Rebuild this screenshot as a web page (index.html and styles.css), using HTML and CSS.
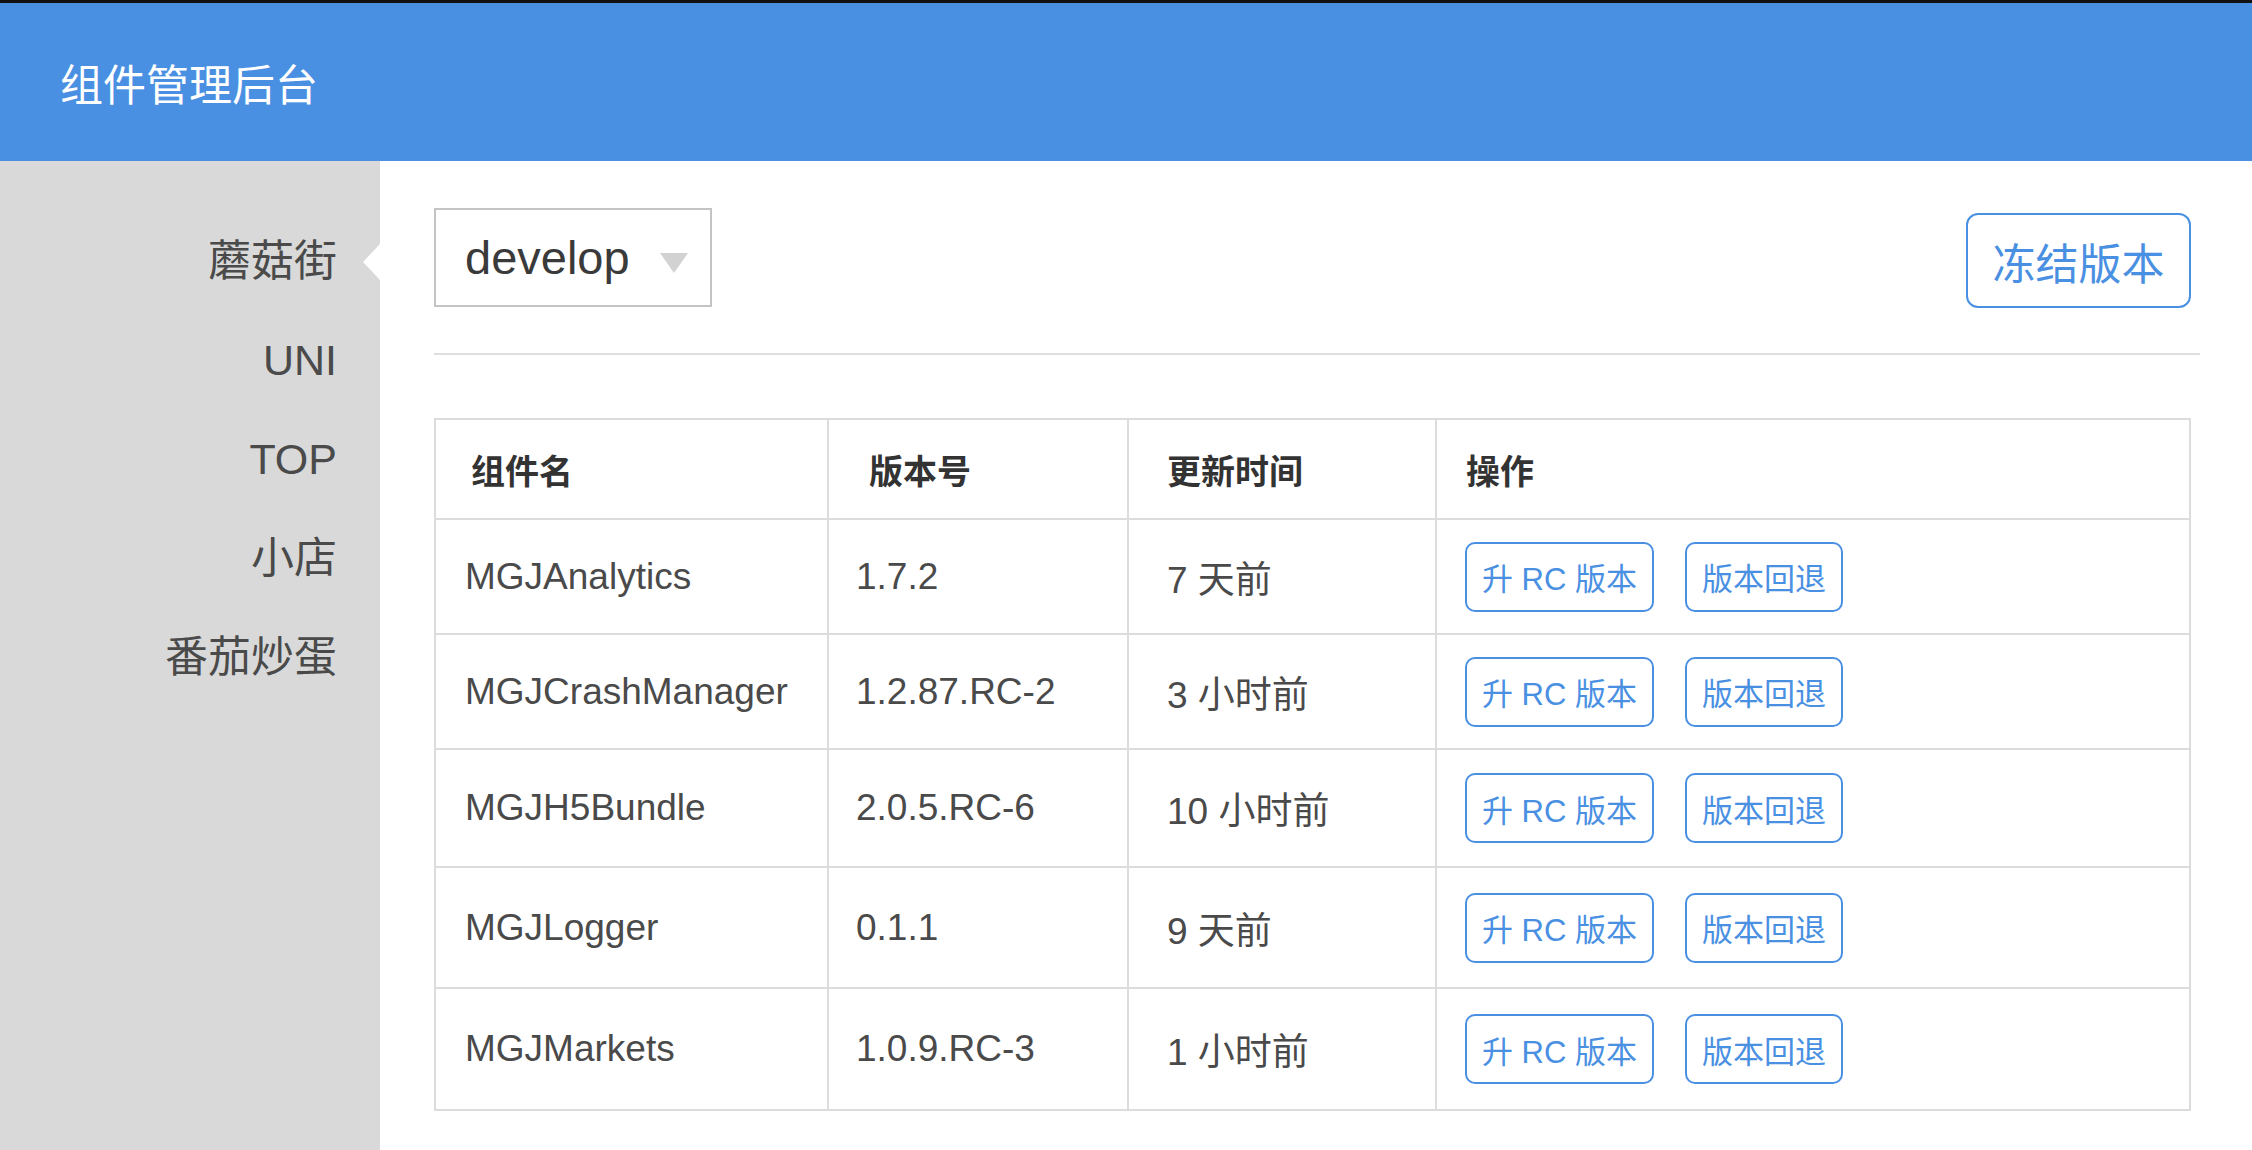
FILE: index.html
```html
<!DOCTYPE html>
<html lang="zh-CN">
<head>
<meta charset="utf-8">
<title>组件管理后台</title>
<link rel="stylesheet" href="styles.css">
</head>
<body>
<div class="app">
  <header class="header">
    <h1 class="title">组件管理后台</h1>
  </header>
  <div class="layout">
    <nav class="sidebar">
      <a class="nav-item active">蘑菇街</a>
      <a class="nav-item">UNI</a>
      <a class="nav-item">TOP</a>
      <a class="nav-item">小店</a>
      <a class="nav-item">番茄炒蛋</a>
    </nav>
    <main class="main">
      <div class="toolbar">
        <div class="select">
          <span class="select-value">develop</span>
          <span class="select-caret"></span>
        </div>
        <button class="btn btn-large">冻结版本</button>
      </div>
      <hr class="divider">
      <table class="grid">
        <colgroup>
          <col class="c-name">
          <col class="c-ver">
          <col class="c-time">
          <col class="c-ops">
        </colgroup>
        <thead>
          <tr><th>组件名</th><th>版本号</th><th>更新时间</th><th>操作</th></tr>
        </thead>
        <tbody>
          <tr>
            <td>MGJAnalytics</td><td>1.7.2</td><td>7 天前</td>
            <td><div class="ops"><button class="btn btn-small">升 RC 版本</button><button class="btn btn-small">版本回退</button></div></td>
          </tr>
          <tr>
            <td>MGJCrashManager</td><td>1.2.87.RC-2</td><td>3 小时前</td>
            <td><div class="ops"><button class="btn btn-small">升 RC 版本</button><button class="btn btn-small">版本回退</button></div></td>
          </tr>
          <tr>
            <td>MGJH5Bundle</td><td>2.0.5.RC-6</td><td>10 小时前</td>
            <td><div class="ops"><button class="btn btn-small">升 RC 版本</button><button class="btn btn-small">版本回退</button></div></td>
          </tr>
          <tr>
            <td>MGJLogger</td><td>0.1.1</td><td>9 天前</td>
            <td><div class="ops"><button class="btn btn-small">升 RC 版本</button><button class="btn btn-small">版本回退</button></div></td>
          </tr>
          <tr>
            <td>MGJMarkets</td><td>1.0.9.RC-3</td><td>1 小时前</td>
            <td><div class="ops"><button class="btn btn-small">升 RC 版本</button><button class="btn btn-small">版本回退</button></div></td>
          </tr>
        </tbody>
      </table>
    </main>
  </div>
</div>
</body>
</html>
```

FILE: styles.css
```css
* { box-sizing: border-box; }

html, body {
  margin: 0;
  padding: 0;
  background: #ffffff;
}

body {
  font-family: "Liberation Sans", "Noto Sans CJK SC", sans-serif;
  color: #4a4a4a;
  overflow: hidden;
}

.app {
  min-height: 100vh;
  display: flex;
  flex-direction: column;
  border-top: 3px solid #111111;
}

.header {
  height: 158px;
  background: #4a90e2;
  display: flex;
  align-items: center;
  padding-left: 60px;
  flex: none;
}

.title {
  margin: 0;
  font-size: 43px;
  font-weight: normal;
  line-height: 50px;
  color: #ffffff;
  padding-top: 8px;
}

.layout {
  flex: 1;
  display: flex;
}

.sidebar {
  width: 380px;
  flex: none;
  background: #d9d9d9;
  padding-top: 51px;
  padding-right: 43px;
  display: flex;
  flex-direction: column;
  align-items: flex-end;
}

.nav-item {
  position: relative;
  display: block;
  font-size: 43px;
  line-height: 99px;
  color: #4a4a4a;
  text-align: right;
  width: 100%;
}

.nav-item.active::after {
  content: "";
  position: absolute;
  right: -43px;
  top: 50%;
  margin-top: -18px;
  width: 0;
  height: 0;
  border-top: 18px solid transparent;
  border-bottom: 18px solid transparent;
  border-right: 17px solid #ffffff;
}

.main {
  flex: 1;
  padding: 47px 63px 0 54px;
}

.toolbar {
  display: flex;
  justify-content: space-between;
  align-items: flex-start;
}

.select {
  width: 278px;
  height: 99px;
  border: 2px solid #c4c4c4;
  display: flex;
  align-items: center;
  justify-content: space-between;
  padding: 0 22px 0 29px;
}

.select-value {
  font-size: 47px;
  color: #3a3a3a;
  line-height: 54px;
}

.select-caret {
  width: 0;
  height: 0;
  margin-top: 11px;
  border-left: 14.5px solid transparent;
  border-right: 14.5px solid transparent;
  border-top: 20px solid #d2d2d2;
}

.btn {
  font-family: inherit;
  background: #ffffff;
  color: #4a90e2;
  border: 2px solid #4a90e2;
  cursor: pointer;
  display: inline-flex;
  align-items: center;
  justify-content: center;
  white-space: nowrap;
}

.btn-large {
  margin-top: 5px;
  width: 225px;
  height: 95px;
  border-radius: 12px;
  font-size: 43px;
  padding: 0;
}

.btn-small {
  height: 70px;
  border-radius: 10px;
  font-size: 31px;
  padding: 0 15px;
}

.divider {
  border: 0;
  height: 2px;
  background: #dedede;
  margin: 45px -9px 0 0;
}

.grid {
  width: 100%;
  margin-top: 63px;
  border-collapse: collapse;
  table-layout: fixed;
  border: 2px solid #dcdcdc;
}

.c-name { width: 393px; }
.c-ver { width: 300px; }
.c-time { width: 308px; }
.c-ops { width: 754px; }

.grid th,
.grid td {
  border: 2px solid #dcdcdc;
  text-align: left;
  vertical-align: middle;
  padding-top: 0;
  padding-bottom: 0;
  white-space: nowrap;
}

.grid th {
  height: 100px;
  font-size: 34px;
  font-weight: bold;
  color: #333333;
}

.grid td {
  height: 115px;
  font-size: 37px;
  color: #4a4a4a;
}

.grid tbody tr:nth-child(3) td { height: 118px; }
.grid tbody tr:nth-child(4) td { height: 121px; }
.grid tbody tr:nth-child(5) td { height: 122px; }

.grid th:nth-child(1) { padding-left: 35px; }
.grid th:nth-child(2) { padding-left: 40px; }
.grid th:nth-child(3) { padding-left: 38px; }
.grid th:nth-child(4) { padding-left: 29px; }

.grid td:nth-child(1) { padding-left: 29px; }
.grid td:nth-child(2) { padding-left: 27px; }
.grid td:nth-child(3) { padding-left: 38px; }
.grid td:nth-child(4) { padding-left: 28px; }

.ops {
  display: flex;
  gap: 31px;
  align-items: center;
}
```
